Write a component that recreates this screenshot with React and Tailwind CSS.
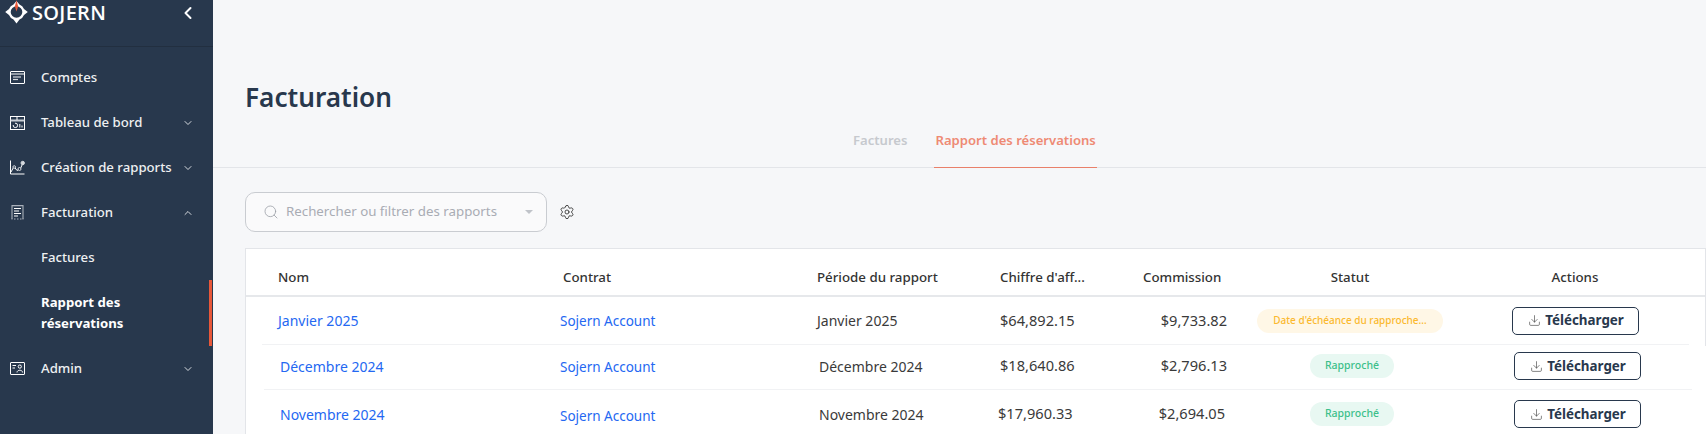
import React from "react";
import { ChevronDown, ChevronUp, ChevronLeft, Search, Settings, Download } from "lucide-react";

function Logo() {
  return (
    <div className="flex items-start pl-[5px] h-[27px]">
      <svg width="23" height="24" viewBox="0 0 23 24" className="shrink-0">
        <path d="M11.5 1 L14.5 4.4 A8.2 8.2 0 0 1 19 9 L22.8 12 L19 15 A8.2 8.2 0 0 1 14.5 19.6 L11.5 23.4 L8.5 19.6 A8.2 8.2 0 0 1 4 15 L0.2 12 L4 9 A8.2 8.2 0 0 1 8.5 4.4 Z" fill="#fff" />
        <circle cx="11.5" cy="12" r="5.8" fill="#28384d" />
        <path d="M11.5 0 L13.1 6.5 L11.5 11.5 L9.9 6.5 Z" fill="#e8583a" />
      </svg>
      <span className="mt-[3px] ml-[4px] text-[20px] leading-[20px] font-semibold tracking-[0.3px] text-white font-['Open_Sans',sans-serif]">SOJERN</span>
    </div>
  );
}

const IconAccounts = () => (
  <svg width="15" height="13" viewBox="0 0 15 13" fill="none" stroke="#fff" strokeWidth="1">
    <rect x="0.5" y="0.5" width="14" height="12" rx="0.5" />
    <path d="M0.5 3 H14.5" />
    <path d="M3 6 H11" strokeWidth="1.2" stroke="#d5d9de" />
    <path d="M3 8.5 H8" strokeWidth="1.2" stroke="#d5d9de" />
  </svg>
);
const IconDash = () => (
  <svg width="15" height="14" viewBox="0 0 15 14" fill="none" stroke="#fff" strokeWidth="1">
    <rect x="0.5" y="0.5" width="14" height="13" />
    <path d="M0.5 4.5 H14.5" strokeWidth="2" stroke="#c9ced5" />
    <path d="M7 0.5 V4" />
    <path d="M3.2 9 A2.2 2.2 0 1 0 5 7.2" />
    <path d="M9.8 8 V11.5 M12 9.5 V11.5" />
  </svg>
);
const IconChart = () => (
  <svg width="15" height="15" viewBox="0 0 15 15" fill="none" stroke="#fff" strokeWidth="1">
    <path d="M0.5 0.5 V14 H14.5" />
    <path d="M1 12 L4 6.5 L7 10.5 L10.5 8.5 L12.5 4" />
    <circle cx="4.2" cy="7" r="1.3" fill="#28384d" stroke="#d5d9de" />
    <circle cx="9.5" cy="9" r="1.5" fill="#28384d" stroke="#d5d9de" />
    <circle cx="12.7" cy="3" r="1.7" fill="#d5d9de" stroke="#d5d9de" />
  </svg>
);
const IconBill = () => (
  <svg width="13" height="15" viewBox="0 0 13 15" fill="none" stroke="#aab1bb" strokeWidth="1.1" className="ml-[1px]">
    <path d="M1 14 V0.6 H12 V14" />
    <path d="M0.5 14 H1.5 M3 14 H4.5 M6 14 H7.5 M9 14 H10.5 M11.5 14 H12.5" />
    <path d="M3 3.5 H10 M3 6 H8 M3 8.5 H10 M3 11 H7" stroke="#fff" />
  </svg>
);
const IconAdmin = () => (
  <svg width="15" height="13" viewBox="0 0 15 13" fill="none" stroke="#fff" strokeWidth="1">
    <rect x="0.5" y="0.5" width="14" height="12" rx="0.5" />
    <path d="M2.5 3.5 H6 M2.5 6 H5" />
    <circle cx="9.8" cy="4.6" r="1.6" />
    <path d="M7 10.5 C7 7.5 12.6 7.5 12.6 10.5" />
  </svg>
);

function NavRow({ icon, label, chevron }) {
  return (
    <div className="flex h-[45px] items-center pr-[19px] pl-[10px] text-[13.2px] font-medium text-[#eef0f2]">
      <div className="flex w-[31px] justify-start">{icon}</div>
      <span className="flex-1 whitespace-nowrap">{label}</span>
      {chevron === "down" && <ChevronDown size={12} strokeWidth={1.8} color="#e8eaed" />}
      {chevron === "up" && <ChevronUp size={12} strokeWidth={1.8} color="#e8eaed" />}
    </div>
  );
}

function Sidebar() {
  return (
    <aside className="h-full w-[213px] shrink-0 bg-[#28384d]">
      <div className="flex h-[47px] items-start justify-between border-b border-[#222f40] pr-[15px]">
        <Logo />
        <ChevronLeft size={20} strokeWidth={2.4} color="#fff" className="mt-[3px]" />
      </div>
      <nav className="pt-[8px]">
        <NavRow icon={<IconAccounts />} label="Comptes" />
        <NavRow icon={<IconDash />} label="Tableau de bord" chevron="down" />
        <NavRow icon={<IconChart />} label="Création de rapports" chevron="down" />
        <NavRow icon={<IconBill />} label="Facturation" chevron="up" />
        <div className="flex h-[45px] items-center pl-[41px] text-[13.2px] font-medium text-[#eef0f2]">Factures</div>
        <div className="relative flex h-[66px] items-center pb-[1px] pl-[41px] text-[13.2px] leading-[21px] font-bold text-white">
          <span>Rapport des<br />réservations</span>
          <span className="absolute top-0 right-[1px] h-full w-[3px] bg-[#e8583a]" />
        </div>
        <NavRow icon={<IconAdmin />} label="Admin" chevron="down" />
      </nav>
    </aside>
  );
}

function DownloadBtn({ cls }) {
  return (
    <button className={"flex h-[28px] w-[127px] shrink-0 items-center justify-center gap-[4px] rounded-[5px] border border-[#28384d] bg-white pl-[1px] text-[13.4px] font-bold text-[#28384d] " + cls}>
      <Download size={13} strokeWidth={1.2} color="#444" />
      <span>Télécharger</span>
    </button>
  );
}

function Badge({ kind, children }) {
  return (
    <span className={kind === "warn"
      ? "inline-flex h-[24px] w-[186px] items-center justify-center rounded-full bg-[#fff7e6] text-[10px] font-medium text-[#fbb92f]"
      : "inline-flex h-[24px] w-[84px] items-center justify-center rounded-full bg-[#e8f8f2] text-[10.5px] font-medium text-[#3cc08a]"}>
      {children}
    </span>
  );
}

const name = "text-[14px] text-[#2468f2]";
const acct = "text-[13.5px] text-[#2468f2]";
const cell = "text-[14px] text-[#3a3a3a]";
const num = "text-[14.6px] text-[#3a3a3a]";

function Table() {
  return (
    <div className="ml-[32px] flex h-[186px] shrink-0 flex-col border-l border-[#e3e5e9]">
      <div className="h-[98px] shrink-0 border-t border-r border-[#e3e5e9] bg-white">
        <div className="flex h-[48px] items-center border-b-2 border-[#e6e8eb] pt-[11px] text-[13.3px] font-medium text-[#333]">
          <div className="w-[317px] pl-[32px]">Nom</div>
          <div className="w-[254px]">Contrat</div>
          <div className="w-[183px]">Période du rapport</div>
          <div className="w-[143px]">Chiffre d'aff...</div>
          <div className="w-[100px]">Commission</div>
          <div className="w-[214px] text-center">Statut</div>
          <div className="w-[236px] text-center">Actions</div>
        </div>
        <div className="mx-[16px] flex h-[48px] items-center border-b border-[#f1f2f4]">
          <div className={"w-[298px] pl-[16px] " + name}>Janvier 2025</div>
          <div className={"w-[257px] pt-[1px] " + acct}>Sojern Account</div>
          <div className={"w-[183px] " + cell}>Janvier 2025</div>
          <div className={"w-[100px] pt-[1px] " + num}>$64,892.15</div>
          <div className={"w-[127px] pt-[1px] text-right " + num}>$9,733.82</div>
          <div className="flex w-[246px] justify-center"><Badge kind="warn">Date d'échéance du rapproche...</Badge></div>
          <DownloadBtn cls="ml-[39px]" />
        </div>
      </div>
      <div className="flex-1 bg-white">
        <div className="mr-[14px] ml-[18px] flex h-[44px] items-center border-b border-[#f1f2f4] pb-[3px]">
          <div className={"w-[296px] pl-[16px] " + name}>Décembre 2024</div>
          <div className={"w-[259px] pt-[3px] " + acct}>Sojern Account</div>
          <div className={"w-[181px] " + cell}>Décembre 2024</div>
          <div className={"w-[100px] " + num}>$18,640.86</div>
          <div className={"w-[127px] text-right " + num}>$2,796.13</div>
          <div className="flex w-[250px] justify-center"><Badge>Rapproché</Badge></div>
          <DownloadBtn cls="ml-[37px]" />
        </div>
        <div className="mr-[14px] ml-[18px] flex h-[48px] items-center">
          <div className={"w-[296px] pl-[16px] " + name}>Novembre 2024</div>
          <div className={"w-[259px] pt-[4px] " + acct}>Sojern Account</div>
          <div className={"w-[179px] " + cell}>Novembre 2024</div>
          <div className={"w-[100px] " + num}>$17,960.33</div>
          <div className={"w-[127px] text-right " + num}>$2,694.05</div>
          <div className="flex w-[254px] justify-center"><Badge>Rapproché</Badge></div>
          <DownloadBtn cls="ml-[35px]" />
        </div>
      </div>
    </div>
  );
}

export default function App() {
  return (
    <div className="flex h-[434px] w-[1706px] overflow-hidden bg-[#f6f7f9] font-['Noto_Sans',sans-serif]">
      <Sidebar />
      <main className="flex min-w-0 flex-1 flex-col">
        <h1 className="mt-[79px] ml-[32px] shrink-0 text-[26.2px] leading-[36px] font-semibold text-[#28384d]">Facturation</h1>
        <div className="flex h-[53px] shrink-0 items-stretch gap-[27px] border-b border-[#e3e5e9] pl-[640px] text-[13.1px] font-semibold">
          <div className="flex items-center pb-[1px] text-[#c6c9ce]">Factures</div>
          <div className="-mb-px flex items-center border-b border-[#e9806a] px-[1px] pb-[1px] text-[#ee8a74]">Rapport des réservations</div>
        </div>
        <div className="mt-[24px] ml-[32px] flex h-[40px] shrink-0 items-center">
          <div className="flex h-full w-[302px] items-center rounded-[10px] border border-[#c9ccd1] bg-[#fafafb] pr-[13px] pl-[17px]">
            <Search size={16} strokeWidth={1.2} color="#9a9ea6" />
            <span className="ml-[7px] flex-1 text-[13.3px] text-[#a9acb4]">Rechercher ou filtrer des rapports</span>
            <span className="h-0 w-0 border-x-[4px] border-t-[4px] border-x-transparent border-t-[#c0c3c9]" />
          </div>
          <Settings size={16} strokeWidth={1.3} color="#333" className="ml-[12px]" />
        </div>
        <div className="mt-[16px]">
          <Table />
        </div>
      </main>
    </div>
  );
}
